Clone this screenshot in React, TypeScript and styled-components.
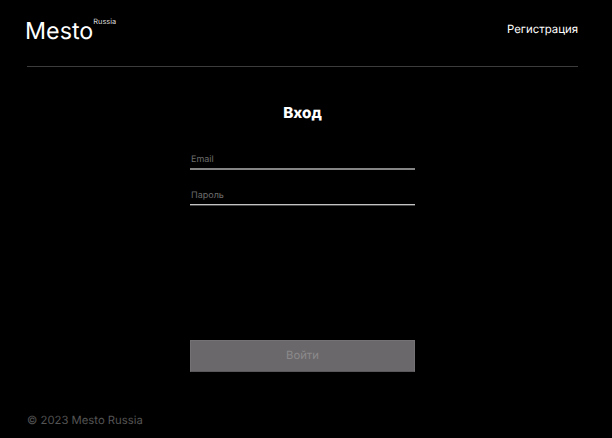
import React from "react";
import styled, { createGlobalStyle } from "styled-components";

const GlobalStyle = createGlobalStyle`
  * { box-sizing: border-box; }
  body { margin: 0; background: #000; color: #fff; font-family: Inter, "Liberation Sans", sans-serif; text-rendering: geometricPrecision; }
`;
const Page = styled.div`
  width: 612px;
  height: 438px;
  padding: 0 34px 0 27px;
  display: flex;
  flex-direction: column;
  overflow: hidden;
`;
const Header = styled.header`
  height: 67px;
  flex: none;
  display: flex;
  justify-content: space-between;
  border-bottom: 1px solid #3c3c3c;
`;
const Logo = styled.div`
  display: flex;
  align-items: flex-start;
  margin-left: -2px;
  padding-top: 17px;
`;
const Brand = styled.span`
  font-size: 23.3px;
  line-height: 28px;
`;
const Region = styled.span`
  font-size: 7.4px;
  line-height: 9px;
  color: #ddd;
`;
const NavLink = styled.a`
  padding-top: 22px;
  font-size: 11.4px;
  line-height: 15px;
`;
const Form = styled.form`
  width: 225px;
  height: 304px;
  margin: 36px 0 0 163px;
  flex: none;
  display: flex;
  flex-direction: column;
`;
const Title = styled.h1`
  margin: 0 0 27px;
  font-size: 15.2px;
  line-height: 19px;
  font-weight: 850;
  text-align: center;
`;
const Field = styled.input<{ $crisp?: boolean }>`
  height: 21px;
  margin: 0 0 15px;
  padding: 2px 1px 0;
  border: 0;
  border-bottom: 2px solid #858585;
  ${({ $crisp }) => $crisp && "border-bottom: 1px solid #c2c2c2; box-shadow: 0 1px #484848; height: 20px; margin-bottom: 16px;"}
  border-radius: 0;
  outline: 0;
  background: transparent;
  color: #fff;
  font: 400 9px/17px Inter, sans-serif;
  text-rendering: geometricPrecision;
  &::placeholder { color: #6c6c6c; opacity: 1; }
`;
const Submit = styled.button`
  height: 32px;
  margin-top: 119px;
  padding: 0 0 1px;
  flex: none;
  border: 1px solid #747274;
  border-bottom-color: #5a585a;
  background: #6a686a;
  color: #8c8a8c;
  font: 400 11.3px/29px Inter, sans-serif;
  text-rendering: geometricPrecision;
`;
const Footer = styled.footer`
  padding-top: 6px;
  font-size: 11.3px;
  line-height: 15px;
  color: #545454;
`;

export default function App() {
  return (
    <>
      <GlobalStyle />
      <Page>
        <Header>
          <Logo><Brand>Mesto</Brand><Region>Russia</Region></Logo>
          <NavLink>Регистрация</NavLink>
        </Header>
        <Form>
          <Title>Вход</Title>
          <Field type="email" placeholder="Email" />
          <Field type="password" placeholder="Пароль" $crisp />
          <Submit type="button">Войти</Submit>
        </Form>
        <Footer>© 2023 Mesto Russia</Footer>
      </Page>
    </>
  );
}
